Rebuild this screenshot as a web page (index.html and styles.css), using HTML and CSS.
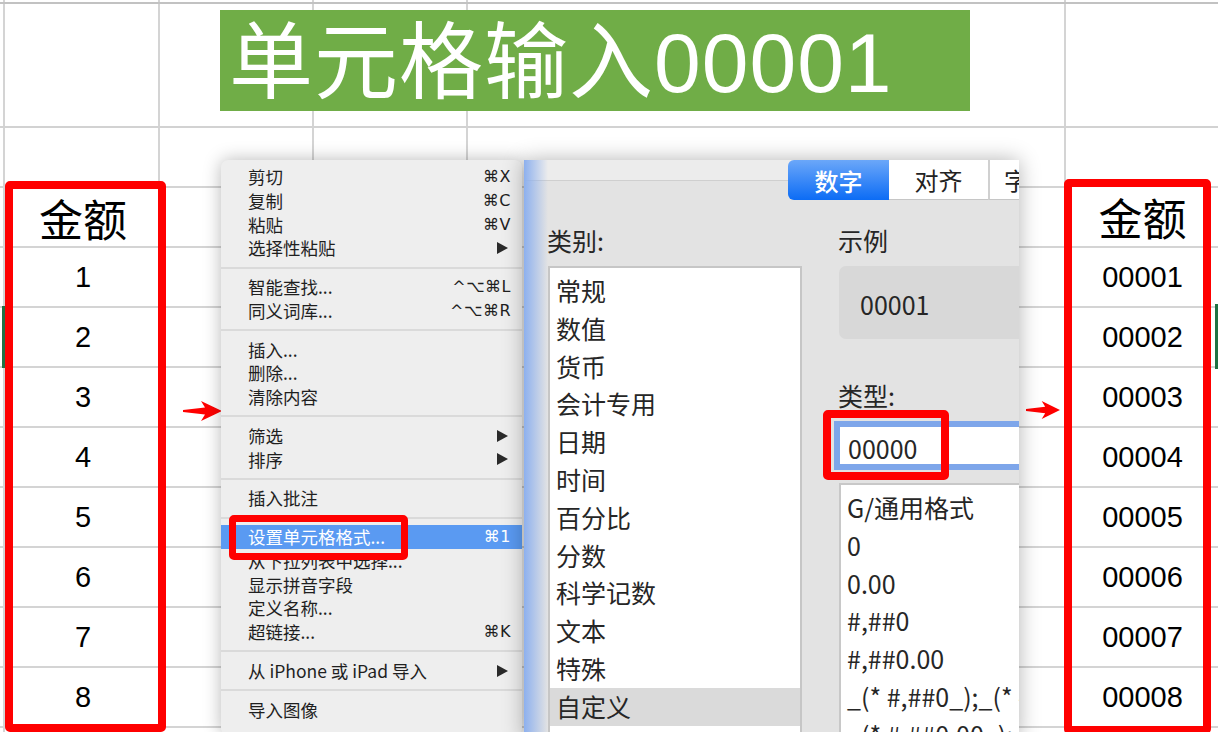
FILE: index.html
```html
<!DOCTYPE html>
<html lang="zh-CN">
<head>
<meta charset="utf-8">
<title>单元格输入00001</title>
<link rel="stylesheet" href="styles.css">
</head>
<body>
<div class="sheet">
  <div class="title-row">
    <div class="title"><span class="title-text">单元格输入00001</span></div>
  </div>
  <div class="main">
    <div class="col col-left">
      <div class="cell head">金额</div>
      <div class="cell">1</div>
      <div class="cell">2</div>
      <div class="cell">3</div>
      <div class="cell">4</div>
      <div class="cell">5</div>
      <div class="cell">6</div>
      <div class="cell">7</div>
      <div class="cell">8</div>
    </div>

    <svg class="arrow arrow-left" viewBox="0 0 39 22" width="39" height="22"><polygon points="0,10 22,7.5 18,1 39,11 18,21 22,14.5 0,12" fill="#ff0000"/></svg>

    <div class="menu">
      <div class="mi"><span>剪切</span><span class="sc">⌘X</span></div>
      <div class="mi"><span>复制</span><span class="sc">⌘C</span></div>
      <div class="mi"><span>粘贴</span><span class="sc">⌘V</span></div>
      <div class="mi"><span>选择性粘贴</span><span class="sub"></span></div>
      <div class="sep"></div>
      <div class="mi"><span>智能查找...</span><span class="sc">^⌥⌘L</span></div>
      <div class="mi"><span>同义词库...</span><span class="sc">^⌥⌘R</span></div>
      <div class="sep"></div>
      <div class="mi"><span>插入...</span></div>
      <div class="mi"><span>删除...</span></div>
      <div class="mi"><span>清除内容</span></div>
      <div class="sep"></div>
      <div class="mi"><span>筛选</span><span class="sub"></span></div>
      <div class="mi"><span>排序</span><span class="sub"></span></div>
      <div class="sep"></div>
      <div class="mi"><span>插入批注</span></div>
      <div class="sep"></div>
      <div class="mi active"><span>设置单元格格式...</span><span class="sc">⌘1</span></div>
      <div class="mi"><span>从下拉列表中选择...</span></div>
      <div class="mi"><span>显示拼音字段</span></div>
      <div class="mi"><span>定义名称...</span></div>
      <div class="mi"><span>超链接...</span><span class="sc">⌘K</span></div>
      <div class="sep"></div>
      <div class="mi"><span>从 iPhone 或 iPad 导入</span><span class="sub"></span></div>
      <div class="sep"></div>
      <div class="mi"><span>导入图像</span></div>
      <div class="mark mark-menu"></div>
    </div>

    <div class="dialog">
      <div class="tabs">
        <div class="tab active">数字</div>
        <div class="tab">对齐</div>
        <div class="tab tab-cut">字体</div>
      </div>
      <div class="dlg-body">
        <div class="dlg-left">
          <div class="label">类别:</div>
          <div class="listbox">
            <div class="li">常规</div>
            <div class="li">数值</div>
            <div class="li">货币</div>
            <div class="li">会计专用</div>
            <div class="li">日期</div>
            <div class="li">时间</div>
            <div class="li">百分比</div>
            <div class="li">分数</div>
            <div class="li">科学记数</div>
            <div class="li">文本</div>
            <div class="li">特殊</div>
            <div class="li selected">自定义</div>
          </div>
        </div>
        <div class="dlg-right">
          <div class="label">示例</div>
          <div class="sample">00001</div>
          <div class="label label-type">类型:</div>
          <div class="type-input">00000</div>
          <div class="fmt-list">
            <div class="li">G/通用格式</div>
            <div class="li">0</div>
            <div class="li">0.00</div>
            <div class="li">#,##0</div>
            <div class="li">#,##0.00</div>
            <div class="li">_(* #,##0_);_(* #,##0_)</div>
            <div class="li">_(* #,##0.00_);_(* #,##0.00_)</div>
          </div>
        </div>
      </div>
      <div class="mark mark-type"></div>
    </div>

    <svg class="arrow arrow-right" viewBox="0 0 39 22" width="34" height="20" preserveAspectRatio="none"><polygon points="0,10 22,7.5 18,1 39,11 18,21 22,14.5 0,12" fill="#ff0000"/></svg>

    <div class="col col-right">
      <div class="cell head">金额</div>
      <div class="cell">00001</div>
      <div class="cell">00002</div>
      <div class="cell">00003</div>
      <div class="cell">00004</div>
      <div class="cell">00005</div>
      <div class="cell">00006</div>
      <div class="cell">00007</div>
      <div class="cell">00008</div>
    </div>
  </div>
</div>
</body>
</html>
```

FILE: styles.css
```css
* { box-sizing: border-box; }

body {
  margin: 0;
  width: 1218px;
  height: 732px;
  overflow: hidden;
  background: #fff;
  font-family: "Noto Sans CJK SC", "Noto Sans", sans-serif;
  color: #222;
}

.sheet {
  width: 1218px;
  height: 732px;
  display: flex;
  flex-direction: column;
}

/* ---------- title row ---------- */
.title-row {
  height: 128px;
  flex: none;
  padding: 10px 0 0 220px;
  border-bottom: 2px solid #d2d2d2;
  background:
    linear-gradient(#c2c2c2, #c2c2c2) 0 2px / 100% 2px no-repeat,
    linear-gradient(#d4d4d4, #d4d4d4) 3px 0 / 2px 100% no-repeat,
    linear-gradient(#d4d4d4, #d4d4d4) 158px 0 / 2px 100% no-repeat,
    linear-gradient(#d4d4d4, #d4d4d4) 312px 0 / 2px 100% no-repeat,
    linear-gradient(#d4d4d4, #d4d4d4) 466px 0 / 2px 100% no-repeat,
    linear-gradient(#d4d4d4, #d4d4d4) 1064px 0 / 2px 100% no-repeat,
    #fff;
}

.title {
  width: 750px;
  height: 101px;
  display: flex;
  align-items: center;
  background: #70ad47;
  color: #fff;
  padding: 5px 0 0 9px;
  white-space: nowrap;
}

.title-text {
  font-family: "Liberation Sans", "Noto Sans CJK SC", sans-serif;
  font-size: 84px;
  line-height: 84px;
  letter-spacing: 1px;
}

/* ---------- main area ---------- */
.main {
  flex: 1;
  display: flex;
  align-items: flex-start;
  background:
    linear-gradient(#1f7244, #1f7244) 2px 178px / 3px 62px no-repeat,
    linear-gradient(#1f7244, #1f7244) 1215px 176px / 3px 65px no-repeat,
    linear-gradient(#d4d4d4, #d4d4d4) 3px 0 / 2px 100% no-repeat,
    linear-gradient(#d4d4d4, #d4d4d4) 158px 0 / 2px 100% no-repeat,
    linear-gradient(#d4d4d4, #d4d4d4) 312px 0 / 2px 100% no-repeat,
    linear-gradient(#d4d4d4, #d4d4d4) 466px 0 / 2px 100% no-repeat,
    linear-gradient(#d4d4d4, #d4d4d4) 1064px 0 / 2px 100% no-repeat,
    repeating-linear-gradient(to bottom, transparent 0 58px, #d4d4d4 58px 60px),
    #fff;
}

/* ---------- red bordered columns ---------- */
.col {
  flex: none;
  display: flex;
  flex-direction: column;
  background: #fff;
  border: 8px solid #ff0000;
  border-radius: 5px;
  overflow: hidden;
}

.col-left {
  width: 161px;
  height: 551px;
  margin: 53px 0 0 5px;
}

.col-right {
  width: 147px;
  height: 555px;
  margin: 51px 0 0 4px;
}

.cell {
  flex: none;
  height: 60px;
  border-bottom: 2px solid #d4d4d4;
  display: flex;
  align-items: center;
  justify-content: center;
  font-family: "Liberation Sans", Arial, sans-serif;
  font-size: 29px;
  color: #000;
}

.cell.head {
  font-family: "Noto Sans CJK SC", sans-serif;
  font-size: 44px;
  font-weight: 400;
}

.col-left .cell { padding-right: 5px; }
.col-left .cell.head { height: 59px; }
.col-right .cell { padding-left: 10px; }
.col-right .cell.head { height: 61px; }

/* ---------- arrows ---------- */
.arrow { flex: none; display: block; }
.arrow-left { margin: 272px 0 0 17px; }
.arrow-right { margin: 272px 0 0 7px; }

/* ---------- context menu ---------- */
.menu {
  position: relative;
  flex: none;
  width: 301px;
  height: 575px;
  margin: 32px 0 0 -1px;
  padding-top: 5px;
  background: #eeeeee;
  border-radius: 7px;
  box-shadow: 0 0 18px rgba(0, 0, 0, 0.28);
  color: #1f1f1f;
}

.mi {
  height: 23.75px;
  display: flex;
  align-items: center;
  justify-content: space-between;
  padding: 0 11px 0 27px;
  font-size: 17.5px;
  line-height: 23.75px;
  white-space: nowrap;
}

.mi .sc {
  font-family: "DejaVu Sans", "Noto Sans CJK SC", sans-serif;
  font-size: 16px;
  letter-spacing: 0.5px;
}

.mi .sub {
  width: 0;
  height: 0;
  border-left: 11px solid #2a2a2a;
  border-top: 6px solid transparent;
  border-bottom: 6px solid transparent;
  margin-right: 3px;
}

.mi.active {
  background: #5a9af2;
  color: #fff;
}

.sep {
  height: 15px;
  display: flex;
  align-items: center;
}

.sep::before {
  content: "";
  display: block;
  width: 100%;
  height: 2px;
  background: #dadada;
}

.mark {
  position: absolute;
  border-style: solid;
  border-color: #ff0000;
  border-radius: 5px;
}

.mark-menu {
  left: 8px;
  top: 355px;
  width: 179px;
  height: 45px;
  border-width: 7px;
}

/* ---------- format dialog ---------- */
.dialog {
  position: relative;
  flex: none;
  width: 495px;
  height: 580px;
  margin: 32px 0 0 2px;
  overflow: hidden;
  color: #262626;
  box-shadow: 0 0 20px rgba(0, 0, 0, 0.3);
  background:
    linear-gradient(to right, #8db0ee, rgba(141, 176, 238, 0)) 0 0 / 24px 100% no-repeat,
    linear-gradient(#ececec, #ececec) 0 0 / 100% 20px no-repeat,
    linear-gradient(#cfcfcf, #cfcfcf) 0 20px / 100% 1px no-repeat,
    #e3e3e3;
}

.tabs {
  display: flex;
  height: 40px;
  margin-left: 264px;
}

.tab {
  flex: none;
  width: 99px;
  height: 40px;
  display: flex;
  align-items: center;
  justify-content: center;
  background: #fff;
  border-bottom: 1px solid #c6c6c6;
  font-size: 24px;
  color: #222;
}

.tab.active {
  width: 101px;
  background: linear-gradient(#6ba7f9, #0c6cf5);
  color: #fff;
  font-weight: 500;
  border-radius: 6px 0 0 6px;
  border-bottom: none;
}

.tab-cut {
  border-left: 2px solid #d0d0d0;
  justify-content: flex-start;
  padding-left: 14px;
}

.dlg-body {
  display: flex;
  padding: 24px 0 0 23px;
}

.label {
  font-size: 25px;
  line-height: 32px;
  height: 32px;
}

.dlg-left {
  flex: none;
  width: 255px;
}

.listbox {
  margin-top: 10px;
  margin-left: 1px;
  width: 254px;
  height: 480px;
  background: #fff;
  border: 2px solid #c6c6c6;
  padding-top: 4px;
}

.li {
  height: 37.8px;
  line-height: 37.8px;
  padding-left: 6px;
  font-size: 25px;
  white-space: nowrap;
}

.li.selected { background: #dadada; }

.dlg-right {
  flex: none;
  width: 240px;
  margin-left: 36px;
}

.sample {
  margin-top: 10px;
  margin-left: 1px;
  height: 73px;
  background: #d8d8d8;
  border-radius: 7px 0 0 7px;
  padding: 4px 0 0 21px;
  font-size: 25px;
  line-height: 69px;
}

.label-type { margin-top: 40px; }

.type-input {
  margin: 10px 0 0 -4px;
  height: 49px;
  border: 6px solid #7ea6ea;
  border-right: none;
  background: #fff;
  padding: 5px 0 0 8px;
  font-size: 25px;
  line-height: 32px;
}

.fmt-list {
  margin: 13px 0 0 1px;
  height: 300px;
  background: #fff;
  border: 2px solid #c8c8c8;
  border-right: none;
  padding-top: 4px;
}

.mark-type {
  left: 299px;
  top: 250px;
  width: 126px;
  height: 70px;
  border-width: 8px;
}
```
